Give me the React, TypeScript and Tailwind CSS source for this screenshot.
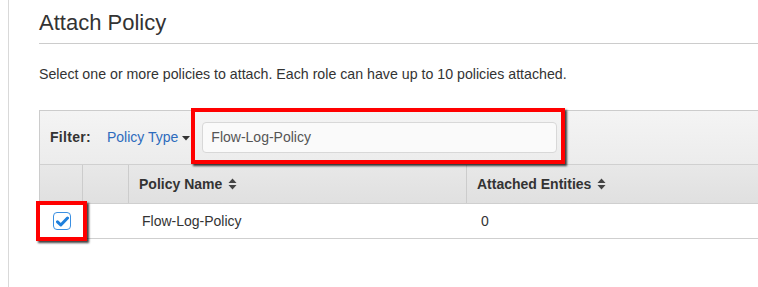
import React from 'react'

function SortIcon() {
  return (
    <svg width="9" height="12" viewBox="0 0 9 12" className="ml-[6px] inline-block">
      <path d="M4.5 0.5 L8.5 5 H0.5 Z" fill="#444" />
      <path d="M4.5 11.5 L8.5 7 H0.5 Z" fill="#444" />
    </svg>
  )
}

function CheckedBox() {
  return (
    <div className="relative w-[18px] h-[18px]">
      <div className="w-[18px] h-[18px] rounded-[4px] border border-[#3a8fe2] bg-white flex items-center justify-center">
        <svg width="13" height="11" viewBox="0 0 13 11">
          <path
            d="M1.5 5.8 L4.8 9 L11.5 2"
            fill="none"
            stroke="#1f7fdc"
            strokeWidth="3"
            strokeLinecap="round"
            strokeLinejoin="round"
          />
        </svg>
      </div>
      <div className="absolute left-[-17px] right-[-16px] top-[-11px] bottom-[-11px] border-[4px] border-[#ff0000] shadow-[2px_2px_2px_rgba(0,0,0,0.75)]" />
    </div>
  )
}

export default function App() {
  return (
    <div className="w-[758px] h-[287px] bg-white overflow-hidden font-['Liberation_Sans',Arial,sans-serif] text-[#333]">
      <div className="ml-[8px] h-full border-l border-[#d9d9d9] pl-[30px]">
        <div className="pt-[10px] pb-[7px] border-b border-[#cccccc]">
          <h1 className="text-[22px] leading-[26px] text-[#333]">Attach Policy</h1>
        </div>
        <p className="mt-[20px] text-[14.2px] leading-[20px] text-[#333]">
          Select one or more policies to attach. Each role can have up to 10 policies attached.
        </p>

        <div className="mt-[26px] border-t border-l border-[#cccccc] w-[760px]">
          <div className="h-[54px] flex items-center bg-gradient-to-b from-[#f4f4f4] to-[#ececec] border-b border-[#d0d0d0] pl-[10px]">
            <span className="text-[14px] font-bold text-[#333] tracking-[0.3px]">Filter:</span>
            <span className="ml-[16px] text-[14px] text-[#2d6bbd] flex items-center">
              Policy Type
              <svg width="8" height="5" viewBox="0 0 8 5" className="ml-[4px] mt-[1px]">
                <path d="M0 0 H8 L4 4.5 Z" fill="#333" />
              </svg>
            </span>
            <div className="relative ml-[12px]">
              <div className="w-[355px] h-[31px] rounded-[4px] border border-[#d8d8d8] bg-[#fafafa] flex items-center pl-[8px] text-[14px] text-[#555]">
                Flow-Log-Policy
              </div>
              <div className="absolute left-[-11px] right-[-8px] top-[-14px] bottom-[-11px] border-[4px] border-[#ff0000] shadow-[2px_2px_2px_rgba(0,0,0,0.75)]" />
            </div>
          </div>

          <div className="flex h-[39px] bg-gradient-to-b from-[#e8e8e8] to-[#e0e0e0] border-b border-[#cfcfcf] text-[14px] font-bold text-[#333]">
            <div className="w-[43px] border-r border-[#cccccc]" />
            <div className="w-[46px] border-r border-[#cccccc]" />
            <div className="w-[338px] border-r border-[#cccccc] flex items-center pl-[10px]">
              Policy Name
              <SortIcon />
            </div>
            <div className="flex-1 flex items-center pl-[10px]">
              Attached Entities
              <SortIcon />
            </div>
          </div>

          <div className="flex h-[35px] border-b border-[#cfcfcf] text-[14px] text-[#333] bg-white">
            <div className="w-[43px] flex items-center justify-center pl-[1px]">
              <CheckedBox />
            </div>
            <div className="w-[46px]" />
            <div className="w-[338px] flex items-center pl-[13px]">Flow-Log-Policy</div>
            <div className="flex-1 flex items-center pl-[14px]">0</div>
          </div>
        </div>
      </div>
    </div>
  )
}
